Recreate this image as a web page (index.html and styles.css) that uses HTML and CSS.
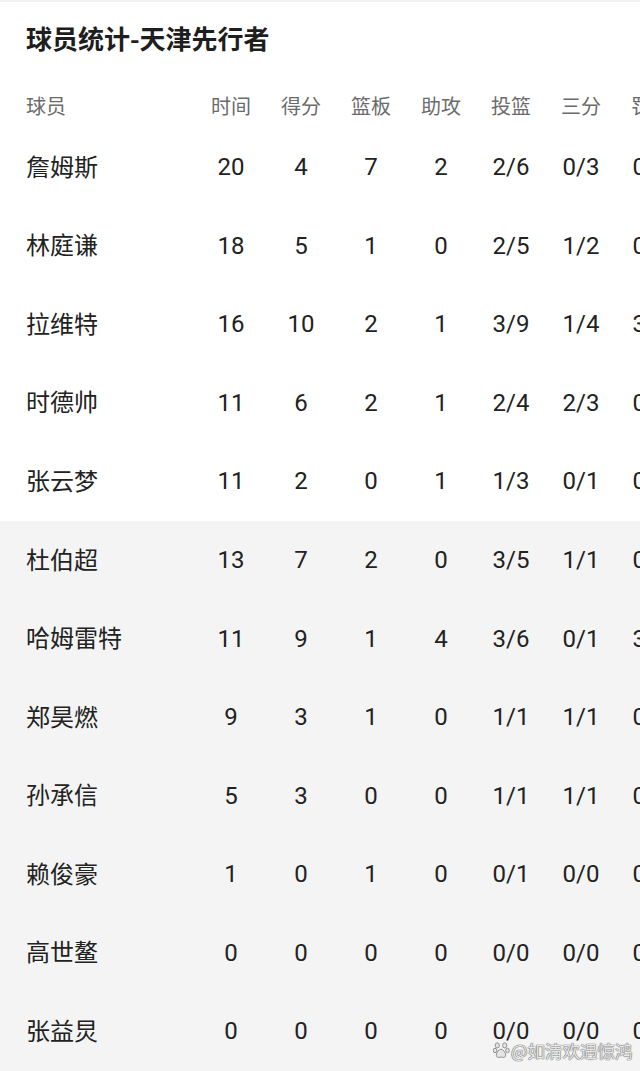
FILE: index.html
```html
<!DOCTYPE html>
<html lang="zh-CN">
<head>
    <meta charset="UTF-8">
    <meta name="viewport" content="width=device-width, initial-scale=1.0">
    <title>球员统计-天津先行者</title>
    <link rel="stylesheet" href="styles.css">
</head>
<body>
    <div class="stats-page">
        <h1 class="stats-title">球员统计-天津先行者</h1>

        <div class="stats-table">
            <div class="stats-row stats-head">
                <div class="cell name">球员</div>
                <div class="cell">时间</div>
                <div class="cell">得分</div>
                <div class="cell">篮板</div>
                <div class="cell">助攻</div>
                <div class="cell">投篮</div>
                <div class="cell">三分</div>
                <div class="cell">罚球</div>
            </div>

            <div class="stats-group starters">
                <div class="stats-row"><div class="cell name">詹姆斯</div><div class="cell">20</div><div class="cell">4</div><div class="cell">7</div><div class="cell">2</div><div class="cell">2/6</div><div class="cell">0/3</div><div class="cell">0/0</div></div>
                <div class="stats-row"><div class="cell name">林庭谦</div><div class="cell">18</div><div class="cell">5</div><div class="cell">1</div><div class="cell">0</div><div class="cell">2/5</div><div class="cell">1/2</div><div class="cell">0/0</div></div>
                <div class="stats-row"><div class="cell name">拉维特</div><div class="cell">16</div><div class="cell">10</div><div class="cell">2</div><div class="cell">1</div><div class="cell">3/9</div><div class="cell">1/4</div><div class="cell">3/4</div></div>
                <div class="stats-row"><div class="cell name">时德帅</div><div class="cell">11</div><div class="cell">6</div><div class="cell">2</div><div class="cell">1</div><div class="cell">2/4</div><div class="cell">2/3</div><div class="cell">0/0</div></div>
                <div class="stats-row"><div class="cell name">张云梦</div><div class="cell">11</div><div class="cell">2</div><div class="cell">0</div><div class="cell">1</div><div class="cell">1/3</div><div class="cell">0/1</div><div class="cell">0/0</div></div>
            </div>

            <div class="stats-group bench">
                <div class="stats-row"><div class="cell name">杜伯超</div><div class="cell">13</div><div class="cell">7</div><div class="cell">2</div><div class="cell">0</div><div class="cell">3/5</div><div class="cell">1/1</div><div class="cell">0/0</div></div>
                <div class="stats-row"><div class="cell name">哈姆雷特</div><div class="cell">11</div><div class="cell">9</div><div class="cell">1</div><div class="cell">4</div><div class="cell">3/6</div><div class="cell">0/1</div><div class="cell">3/4</div></div>
                <div class="stats-row"><div class="cell name">郑昊燃</div><div class="cell">9</div><div class="cell">3</div><div class="cell">1</div><div class="cell">0</div><div class="cell">1/1</div><div class="cell">1/1</div><div class="cell">0/0</div></div>
                <div class="stats-row"><div class="cell name">孙承信</div><div class="cell">5</div><div class="cell">3</div><div class="cell">0</div><div class="cell">0</div><div class="cell">1/1</div><div class="cell">1/1</div><div class="cell">0/0</div></div>
                <div class="stats-row"><div class="cell name">赖俊豪</div><div class="cell">1</div><div class="cell">0</div><div class="cell">1</div><div class="cell">0</div><div class="cell">0/1</div><div class="cell">0/0</div><div class="cell">0/0</div></div>
                <div class="stats-row"><div class="cell name">高世鳌</div><div class="cell">0</div><div class="cell">0</div><div class="cell">0</div><div class="cell">0</div><div class="cell">0/0</div><div class="cell">0/0</div><div class="cell">0/0</div></div>
                <div class="stats-row"><div class="cell name">张益炅</div><div class="cell">0</div><div class="cell">0</div><div class="cell">0</div><div class="cell">0</div><div class="cell">0/0</div><div class="cell">0/0</div><div class="cell">0/0</div></div>
            </div>
        </div>

        <div class="watermark">
            <svg class="paw" width="17" height="17" viewBox="0 0 16 16">
                <g fill="#e4e4e4" stroke="#8c8c8c" stroke-width="0.9">
                    <ellipse cx="4" cy="3.2" rx="2" ry="2.4"/>
                    <ellipse cx="11" cy="3.2" rx="2" ry="2.4"/>
                    <ellipse cx="1.9" cy="8" rx="1.7" ry="2.1"/>
                    <ellipse cx="13.6" cy="8" rx="1.7" ry="2.1"/>
                    <path d="M7.5 6.8c-2 0-4.4 3.2-4.4 5.6 0 1.6 1.3 2.4 2.6 2.1 0.8-0.2 1.2-0.4 1.8-0.4s1 .2 1.8.4c1.3.3 2.6-.5 2.6-2.1 0-2.4-2.4-5.6-4.4-5.6z"/>
                </g>
            </svg>
            <span>@如清欢遇惊鸿</span>
        </div>
    </div>
</body>
</html>
```

FILE: styles.css
```css
* {
    margin: 0;
    padding: 0;
    box-sizing: border-box;
}

body {
    font-family: Roboto, "Noto Sans CJK SC", sans-serif;
    background: #ffffff;
    color: #222222;
    width: 640px;
    overflow: hidden;
}

.stats-page {
    position: relative;
    width: 640px;
    height: 1071px;
    overflow: hidden;
    border-top: 2px solid #f1f1f1;
}

.stats-title {
    font-family: "Noto Sans CJK SC", sans-serif;
    font-size: 26px;
    font-weight: 700;
    color: #1e1e1e;
    height: 80px;
    line-height: 72px;
    padding-left: 26px;
}

.stats-table {
    width: 700px;
}

.stats-row {
    display: grid;
    grid-template-columns: 170px repeat(7, 70px);
    align-items: center;
    height: 78.55px;
    padding-left: 26px;
    font-size: 24px;
}

.stats-head {
    height: 46px;
    font-family: "Noto Sans CJK SC", sans-serif;
    font-size: 20px;
    color: #6b6b6b;
}

.cell {
    text-align: center;
    white-space: nowrap;
}

.cell.name {
    text-align: left;
    font-family: "Noto Sans CJK SC", sans-serif;
}

.stats-row .cell.name {
    font-size: 24px;
    margin-top: -4px;
}

.stats-head .cell.name {
    font-size: 20px;
    margin-top: 0;
}

.bench {
    background: #f4f4f4;
}

.watermark {
    position: absolute;
    left: 493px;
    top: 1036px;
    display: flex;
    align-items: center;
    gap: 1px;
    font-family: "Noto Sans CJK SC", sans-serif;
    font-size: 17.5px;
    color: #e8e8e8;
    text-shadow: 0 0 1px #6e6e6e, 0 0 1px #6e6e6e, 0 0 1px #6e6e6e;
}
```
